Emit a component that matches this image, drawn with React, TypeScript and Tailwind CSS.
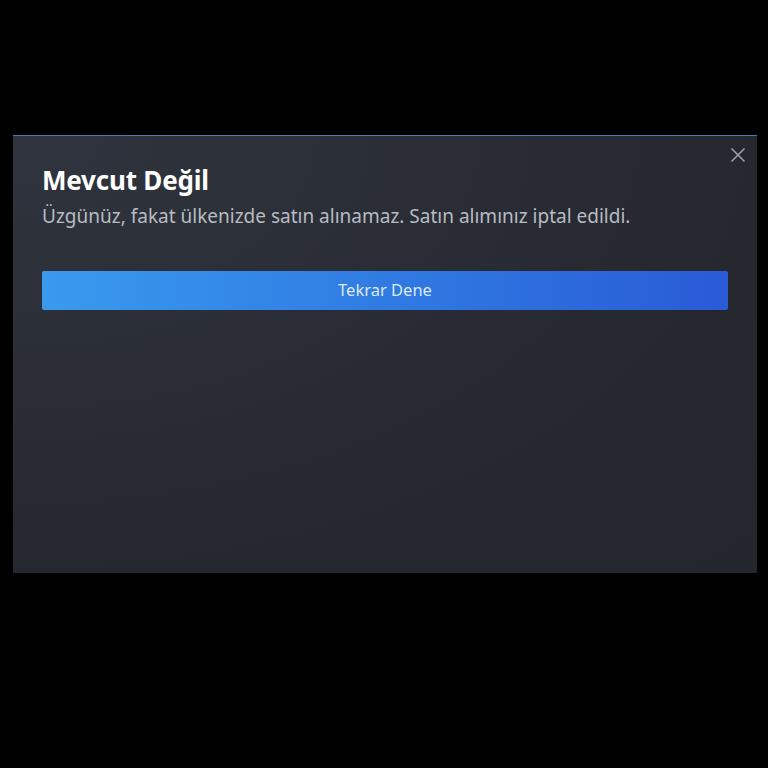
export default function App() {
  return (
    <div
      className="h-[768px] w-[768px] overflow-hidden bg-black pt-[135px] pl-[13px]"
      style={{ fontFamily: '"Noto Sans", "Liberation Sans", Arial, sans-serif' }}
    >
      <div className="relative h-[438px] w-[744px] border-t border-[#4c7ab8] bg-[radial-gradient(ellipse_at_top_left,#30343e_0%,#25282f_70%,#23262d_100%)] pl-[29px] pr-[29px] pt-[28px]">
        {/* Close button */}
        <button className="absolute right-[11px] top-[11px] text-[#9a9ea5]">
          <svg width="16" height="16" viewBox="0 0 16 16" fill="none">
            <path d="M1.5 1.5 L14.5 14.5 M14.5 1.5 L1.5 14.5" stroke="currentColor" strokeWidth="1.6" />
          </svg>
        </button>

        <h1 className="text-[26px] font-bold leading-[32px] tracking-[-0.2px] text-white">Mevcut Değil</h1>
        <p className="mt-[8px] text-[19px] leading-[24px] text-[#b7bcc2]">
          Üzgünüz, fakat ülkenizde satın alınamaz. Satın alımınız iptal edildi.
        </p>

        <button className="mt-[43px] flex h-[39px] w-[686px] items-center justify-center rounded-[2px] bg-gradient-to-r from-[#3a9aee] to-[#2a5ad6] text-[16.5px] text-[#dbe9f9]">
          Tekrar Dene
        </button>
      </div>
    </div>
  );
}
